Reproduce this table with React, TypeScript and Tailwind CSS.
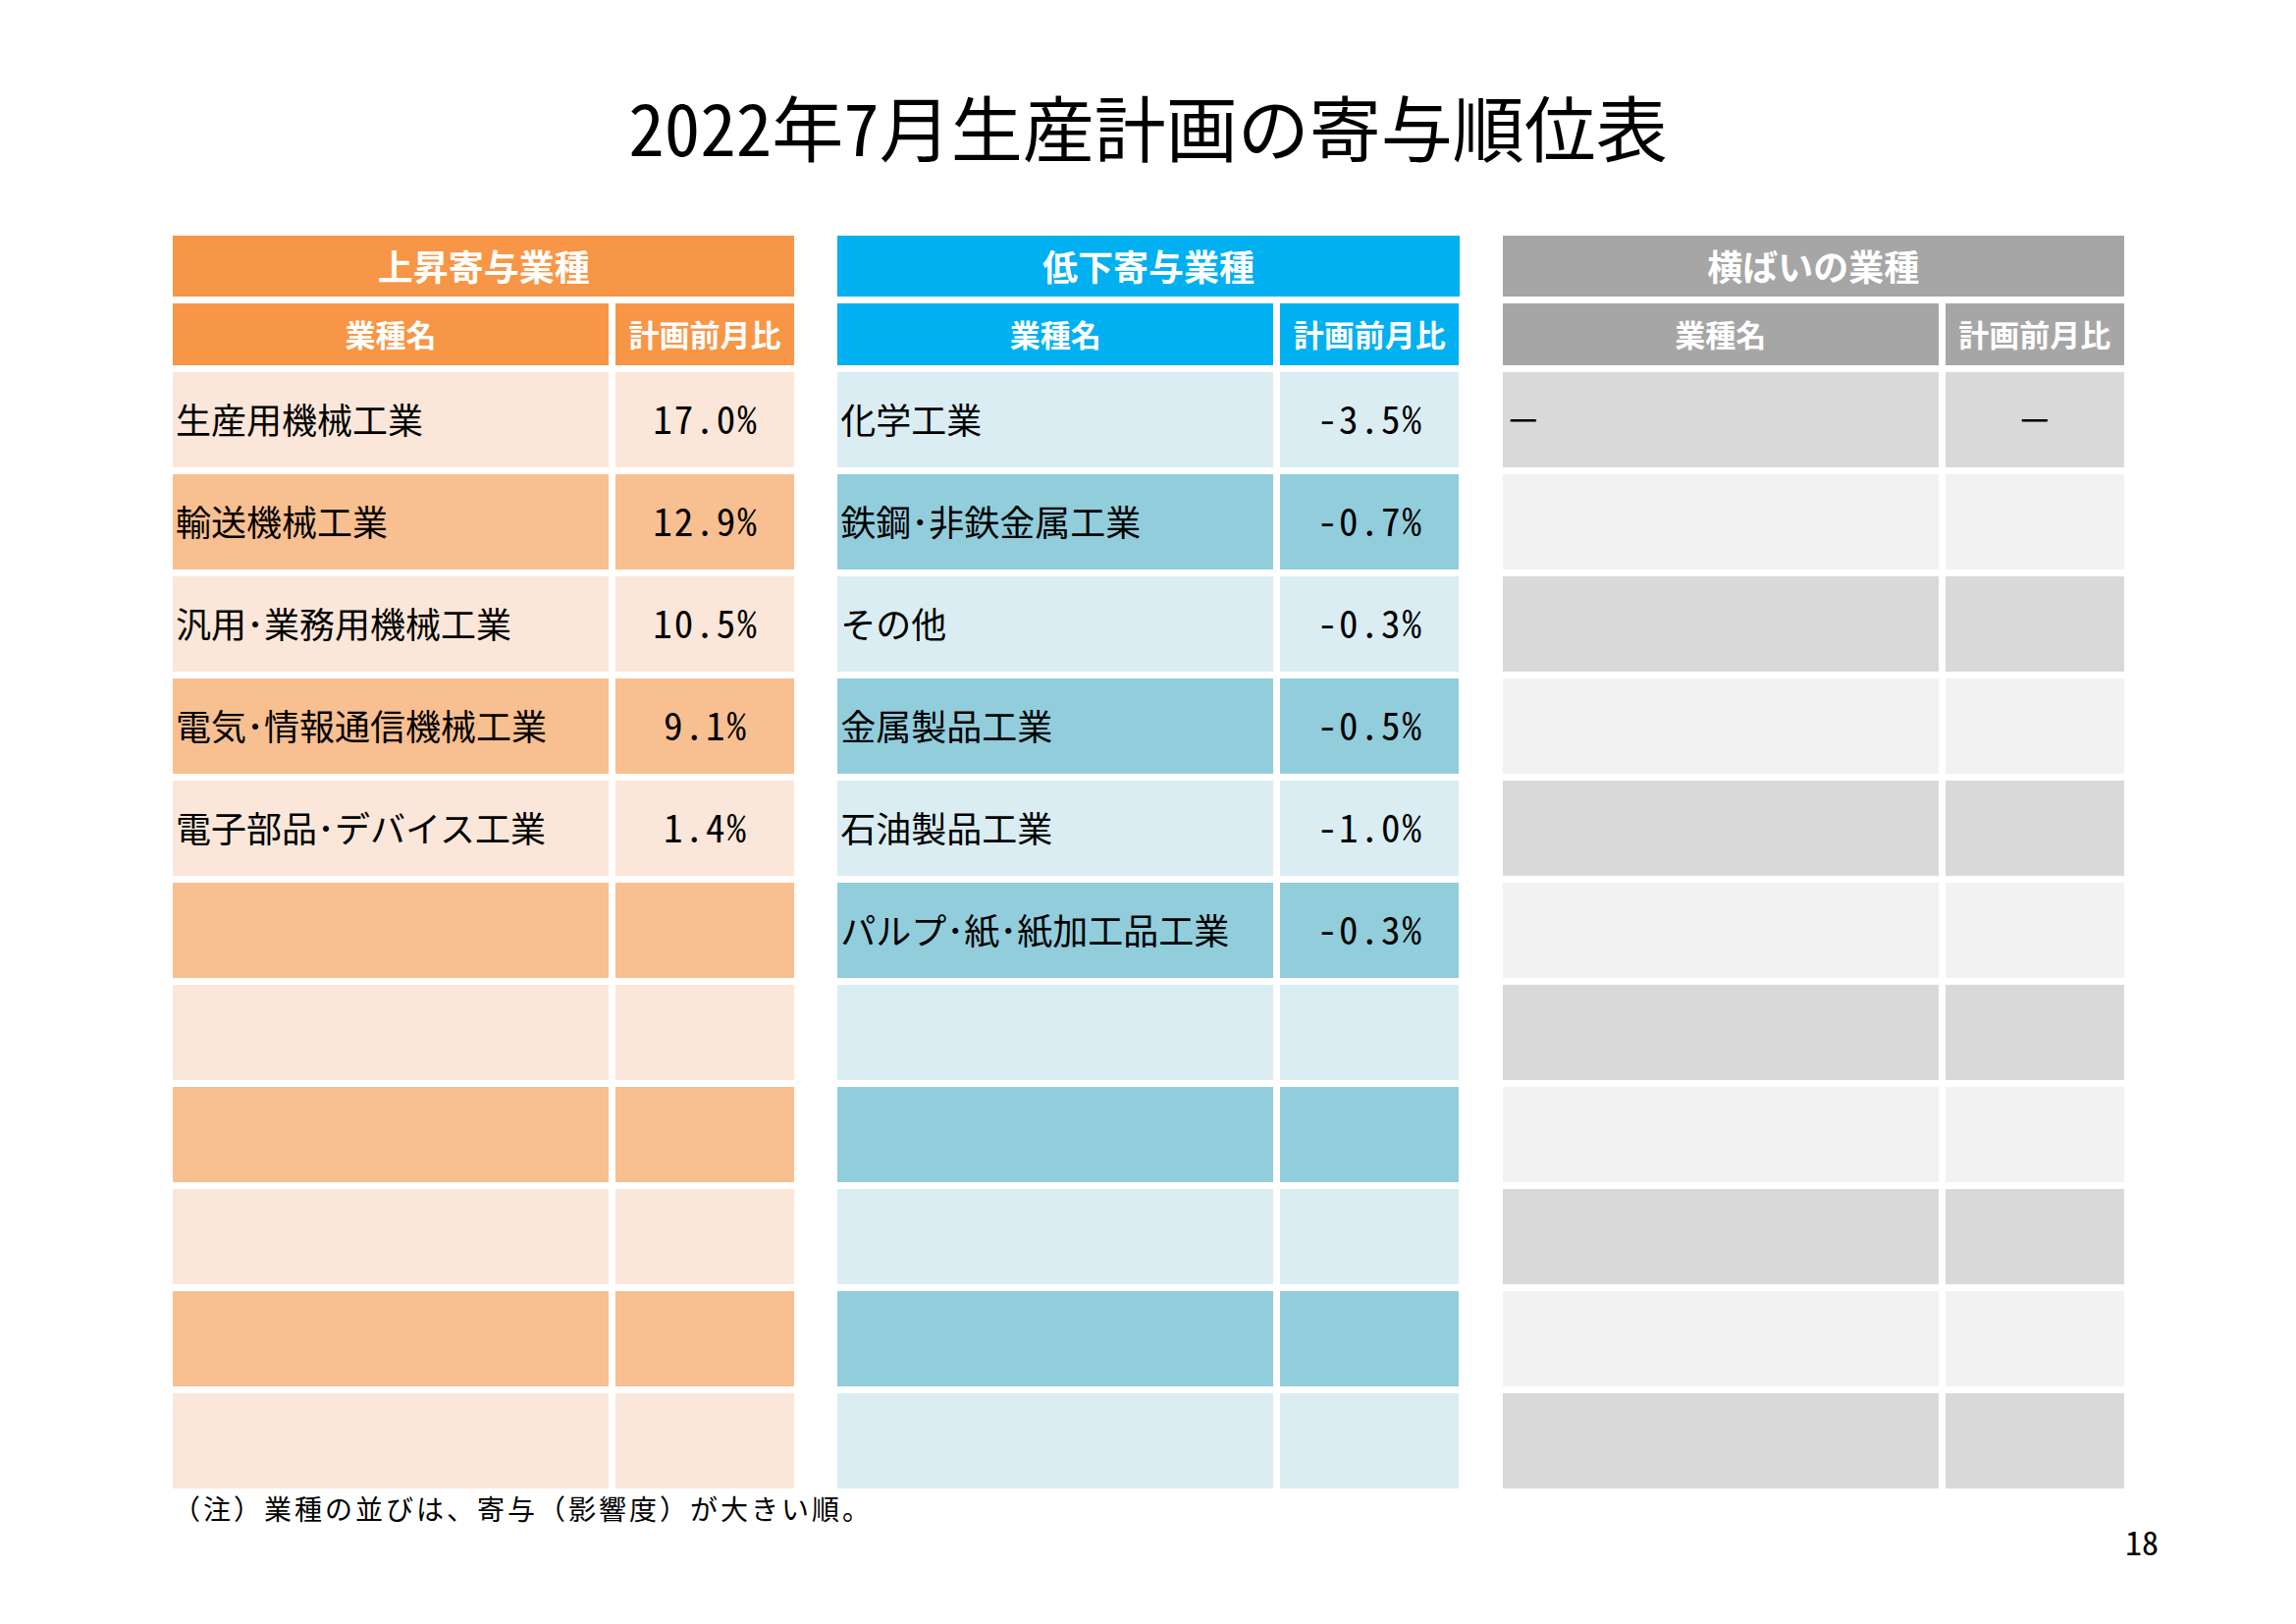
import React from "react";

type Theme = {
  title: string;
  head: string;
  light: string;
  dark: string;
  firstLight: boolean;
  rows: [string, string][];
};

const tables: Theme[] = [
  {
    title: "上昇寄与業種",
    head: "bg-[#f79646]",
    light: "bg-[#fbe7d9]",
    dark: "bg-[#f8bf91]",
    firstLight: true,
    rows: [
      ["生産用機械工業", "17.0%"],
      ["輸送機械工業", "12.9%"],
      ["汎用･業務用機械工業", "10.5%"],
      ["電気･情報通信機械工業", "9.1%"],
      ["電子部品･デバイス工業", "1.4%"],
    ],
  },
  {
    title: "低下寄与業種",
    head: "bg-[#00b0f0]",
    light: "bg-[#daedf3]",
    dark: "bg-[#92cddc]",
    firstLight: true,
    rows: [
      ["化学工業", "-3.5%"],
      ["鉄鋼･非鉄金属工業", "-0.7%"],
      ["その他", "-0.3%"],
      ["金属製品工業", "-0.5%"],
      ["石油製品工業", "-1.0%"],
      ["パルプ･紙･紙加工品工業", "-0.3%"],
    ],
  },
  {
    title: "横ばいの業種",
    head: "bg-[#a6a6a6]",
    light: "bg-[#f2f2f2]",
    dark: "bg-[#d9d9d9]",
    firstLight: false,
    rows: [["－", "－"]],
  },
];

function Table({ t }: { t: Theme }) {
  const rows = Array.from({ length: 11 }, (_, i) => t.rows[i] ?? ["", ""]);
  return (
    <div className="flex flex-col">
      <div
        className={`${t.head} h-[62px] pb-[2px] flex items-center justify-center text-white font-bold text-[36px] leading-none`}
      >
        {t.title}
      </div>
      <div className="mt-[7px] grid grid-cols-[444px_182px] gap-x-[7px] h-[63px]">
        <div className={`${t.head} pb-[2px] flex items-center justify-center text-white font-bold text-[31px] leading-none`}>
          業種名
        </div>
        <div className={`${t.head} pb-[2px] flex items-center justify-center text-white font-bold text-[31px] leading-none`}>
          計画前月比
        </div>
      </div>
      <div className="mt-[7px] flex flex-col gap-y-[7px]">
        {rows.map((r, i) => {
          const isLight = t.firstLight ? i % 2 === 0 : i % 2 === 1;
          const bg = isLight ? t.light : t.dark;
          const dash = r[1] === "－";
          return (
            <div key={i} className="grid grid-cols-[444px_182px] gap-x-[7px] h-[97px]">
              <div className={`${bg} flex items-center pl-[3px] pb-[4px] text-[36px] leading-none text-black whitespace-nowrap`}>
                {r[0]}
              </div>
              {dash ? (
                <div className={`${bg} flex items-center justify-center pb-[4px] text-[36px] leading-none text-black`}>
                  {r[1]}
                </div>
              ) : (
                <div
                  className={`${bg} flex items-center justify-center pb-[4px] pl-[2px] text-[39px] leading-none text-black whitespace-nowrap [font-feature-settings:'hwid'] tracking-[2px]`}
                >
                  {r[1]}
                </div>
              )}
            </div>
          );
        })}
      </div>
    </div>
  );
}

export default function App() {
  return (
    <div className="w-[2339px] h-[1654px] bg-white font-['Noto_Sans_CJK_JP','Noto_Sans',sans-serif] text-black overflow-hidden">
      <div className="pt-[90px] h-[164px] text-center text-[73px] leading-[74px] [font-feature-settings:'hwid']">
        2022年7月生産計画の寄与順位表
      </div>
      <div className="mt-[76px] ml-[176px] w-[1988px] grid grid-cols-3 gap-x-[44px]">
        {tables.map((t) => (
          <Table key={t.title} t={t} />
        ))}
      </div>
      <div className="mt-[5px] ml-[176px] text-[28px] leading-[30px] tracking-[3px] whitespace-nowrap">
        （注）業種の並びは、寄与（影響度）が大きい順。
      </div>
      <div className="mt-[2px] pr-[140px] text-right text-[34px] leading-[34px] [font-feature-settings:'hwid']">18</div>
    </div>
  );
}
